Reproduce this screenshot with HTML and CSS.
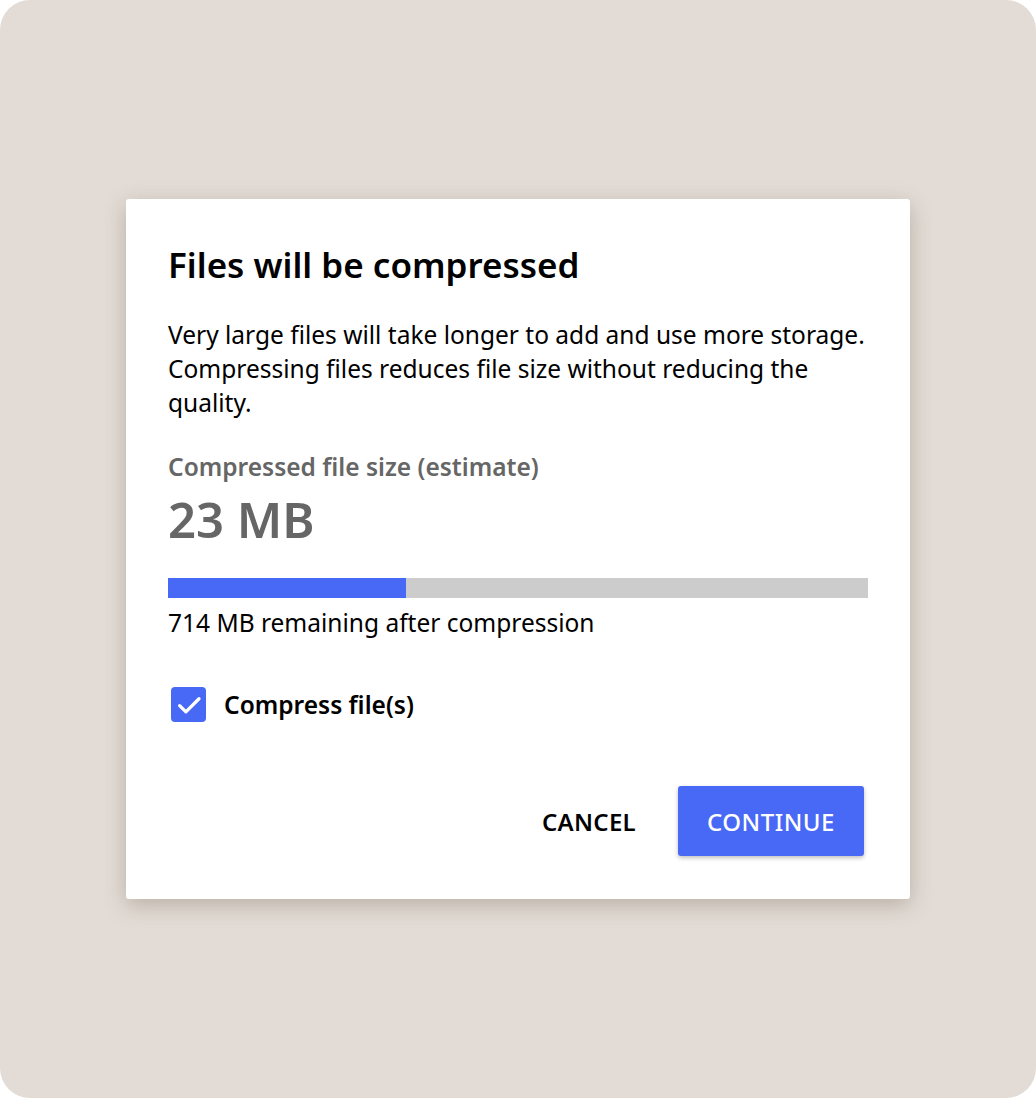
FILE: index.html
```html
<!DOCTYPE html>
<html lang="en">
<head>
<meta charset="utf-8">
<title>Files will be compressed</title>
<link rel="stylesheet" href="styles.css">
</head>
<body>
<div class="stage">
  <div class="dialog" role="dialog" aria-labelledby="dlg-title">
    <h1 class="title" id="dlg-title">Files will be compressed</h1>
    <p class="desc">Very large files will take longer to add and use more storage. Compressing files reduces file size without reducing the quality.</p>
    <div class="estimate-label">Compressed file size (estimate)</div>
    <div class="estimate-value">23 MB</div>
    <div class="bar"><div class="bar-fill" style="width:34%"></div></div>
    <div class="remaining">714 MB remaining after compression</div>
    <label class="check">
      <span class="box">
        <svg viewBox="0 0 24 24" width="30" height="30"><path d="M4.5 12.5l5 5L20 7" fill="none" stroke="#fff" stroke-width="2.6" stroke-linecap="round" stroke-linejoin="round"/></svg>
      </span>
      <span class="check-label">Compress file(s)</span>
    </label>
    <div class="actions">
      <button class="btn btn-text">CANCEL</button>
      <button class="btn btn-primary">CONTINUE</button>
    </div>
  </div>
</div>
</body>
</html>
```
FILE: styles.css
```css
html, body {
  margin: 0;
  padding: 0;
  background: #ffffff;
}
body {
  font-family: "Noto Sans", "Open Sans", sans-serif;
}
.stage {
  width: 1036px;
  height: 1098px;
  background: #e3dcd6;
  border-radius: 30px;
  display: flex;
  align-items: center;
  justify-content: center;
}
.dialog {
  width: 784px;
  height: 700px;
  box-sizing: border-box;
  background: #ffffff;
  border-radius: 3px;
  box-shadow: 0 6px 22px rgba(80, 60, 40, 0.28);
  padding: 40px 42px 43px 42px;
  display: flex;
  flex-direction: column;
  color: #000;
}
.title {
  margin: 0;
  font-size: 35px;
  font-weight: 600;
  line-height: 52px;
}
.desc {
  margin: 27px 0 0 0;
  font-size: 24.5px;
  line-height: 34px;
}
.estimate-label {
  margin-top: 30px;
  font-size: 24.5px;
  font-weight: 600;
  color: #666666;
  line-height: 34px;
}
.estimate-value {
  margin-top: 3px;
  font-size: 49px;
  font-weight: 600;
  color: #666666;
  line-height: 64px;
}
.bar {
  margin-top: 27px;
  height: 20px;
  background: #cccccc;
}
.bar-fill {
  height: 100%;
  background: #4869f5;
}
.remaining {
  margin-top: 8px;
  font-size: 24.5px;
  line-height: 34px;
}
.check {
  margin-top: 47px;
  display: flex;
  align-items: center;
  gap: 18px;
  padding-left: 3px;
}
.box {
  width: 35px;
  height: 35px;
  border-radius: 4px;
  background: #4869f5;
  display: flex;
  align-items: center;
  justify-content: center;
}
.check-label {
  font-size: 24.5px;
  font-weight: 600;
  line-height: 34px;
}
.actions {
  margin-top: auto;
  display: flex;
  justify-content: flex-end;
  align-items: center;
  gap: 42px;
  padding-right: 4px;
}
.btn {
  font-family: inherit;
  font-size: 24px;
  font-weight: 600;
  letter-spacing: 0.3px;
  border: none;
  cursor: pointer;
}
.btn-text {
  background: transparent;
  color: #000;
  padding: 0;
}
.btn-primary {
  width: 186px;
  height: 70px;
  background: #4869f5;
  color: #ffffff;
  font-weight: 500;
  letter-spacing: 0.5px;
  border-radius: 3px;
  box-shadow: 0 2px 4px rgba(0, 0, 0, 0.25);
}
```
